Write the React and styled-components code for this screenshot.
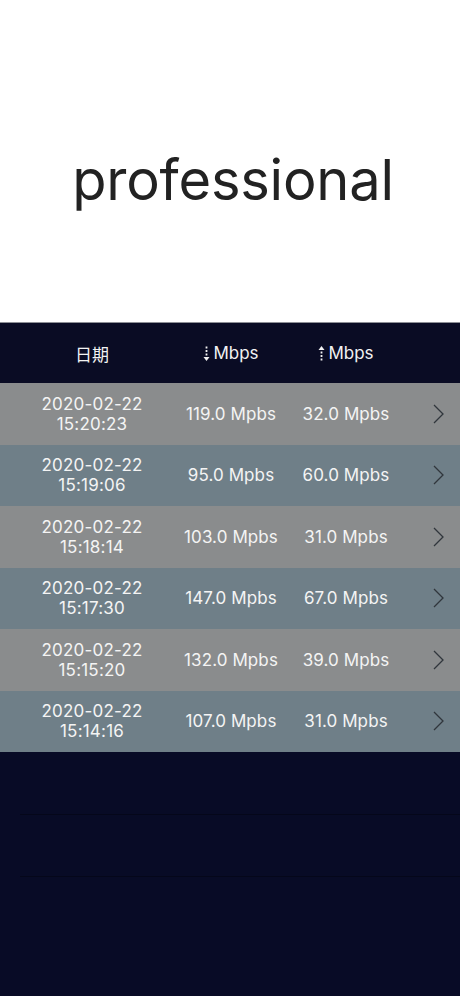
import React from "react";
import styled, { createGlobalStyle } from "styled-components";

const Global = createGlobalStyle`
  html, body { margin: 0; padding: 0; background: #080b26; }
  body { font-family: Inter, "Noto Sans", "Noto Sans CJK SC", sans-serif; }
  #root { width: 460px; height: 996px; }
`;

const Page = styled.div`
  width: 460px;
  height: 996px;
  display: flex;
  flex-direction: column;
  background: #080b26;
  overflow: hidden;
`;

const Hero = styled.div`
  height: 323px;
  flex: none;
  box-sizing: border-box;
  padding-top: 38px;
  padding-left: 6px;
  background: #ffffff;
  display: flex;
  align-items: center;
  justify-content: center;
  border-bottom: 1px solid #8e9096;
`;

const Title = styled.h1`
  margin: 0;
  font-family: Inter, "Noto Sans", sans-serif;
  font-weight: 400;
  font-size: 56px;
  letter-spacing: -0.2px;
  color: #222222;
`;

const Grid = `
  display: grid;
  grid-template-columns: 184px 94px 136px 46px;
  align-items: center;
`;

const Header = styled.div`
  ${Grid}
  height: 60px;
  background: #0a0c24;
  color: #f2f2f2;
  font-size: 17px;
`;

const HeadCell = styled.div`
  display: flex;
  align-items: center;
  justify-content: center;
  gap: 3px;
  font-family: Inter, "Noto Sans CJK SC", sans-serif;
`;

const Row = styled.div`
  ${Grid}
  height: 61.5px;
  background: ${(p) => (p.$alt ? "#6f7f88" : "#8a8c8d")};
  color: #f4f4f4;
  font-size: 17px;
`;

const DateCell = styled.div`
  text-align: center;
  line-height: 20px;
  letter-spacing: 0.2px;
`;

const Value = styled.div`
  text-align: center;
  white-space: nowrap;
  letter-spacing: 0.1px;
`;

const Chevron = styled.div`
  display: flex;
  justify-content: flex-end;
  padding-right: 16px;
`;

const Empty = styled.div`
  height: 61.5px;
  margin-left: 20px;
  border-bottom: 1px solid #05071a;
`;

const DashArrow = ({ up }) => (
  <svg width="7" height="15" viewBox="0 0 7 15" fill="#f2f2f2">
    {up ? (
      <>
        <path d="M3.5 0 L6.5 4 L0.5 4 Z" />
        <rect x="2.6" y="5.5" width="1.8" height="2" />
        <rect x="2.6" y="9" width="1.8" height="2" />
        <rect x="2.6" y="12.5" width="1.8" height="2" />
      </>
    ) : (
      <>
        <rect x="2.6" y="0.5" width="1.8" height="2" />
        <rect x="2.6" y="4" width="1.8" height="2" />
        <rect x="2.6" y="7.5" width="1.8" height="2" />
        <path d="M3.5 15 L6.5 11 L0.5 11 Z" />
      </>
    )}
  </svg>
);

const ChevronIcon = () => (
  <svg width="11" height="20" viewBox="0 0 11 20" fill="none">
    <path d="M1 1 L10 10 L1 19" stroke="#30363c" strokeWidth="1.3" />
  </svg>
);

const data = [
  ["2020-02-22", "15:20:23", "119.0 Mpbs", "32.0 Mpbs"],
  ["2020-02-22", "15:19:06", "95.0 Mpbs", "60.0 Mpbs"],
  ["2020-02-22", "15:18:14", "103.0 Mpbs", "31.0 Mpbs"],
  ["2020-02-22", "15:17:30", "147.0 Mpbs", "67.0 Mpbs"],
  ["2020-02-22", "15:15:20", "132.0 Mpbs", "39.0 Mpbs"],
  ["2020-02-22", "15:14:16", "107.0 Mpbs", "31.0 Mpbs"],
];

export default function App() {
  return (
    <Page>
      <Global />
      <Hero>
        <Title>professional</Title>
      </Hero>
      <Header>
        <HeadCell>日期</HeadCell>
        <HeadCell>
          <DashArrow />
          Mbps
        </HeadCell>
        <HeadCell>
          <DashArrow up />
          Mbps
        </HeadCell>
        <div />
      </Header>
      {data.map((d, i) => (
        <Row key={i} $alt={i % 2 === 1}>
          <DateCell>
            {d[0]}
            <br />
            {d[1]}
          </DateCell>
          <Value>{d[2]}</Value>
          <Value>{d[3]}</Value>
          <Chevron>
            <ChevronIcon />
          </Chevron>
        </Row>
      ))}
      <Empty />
      <Empty />
    </Page>
  );
}
